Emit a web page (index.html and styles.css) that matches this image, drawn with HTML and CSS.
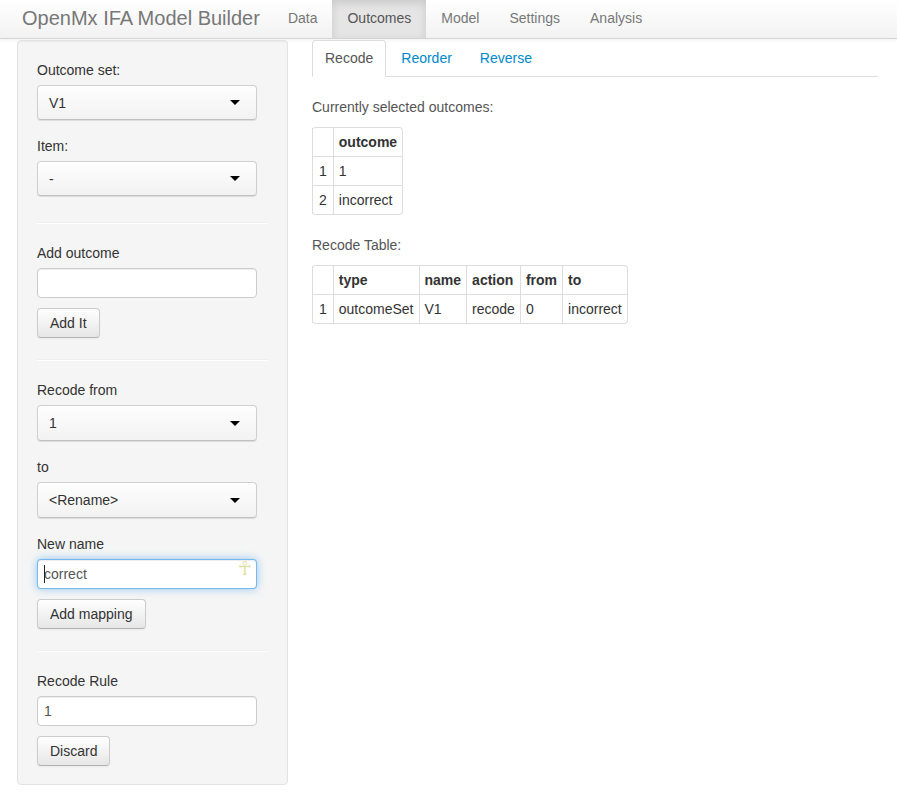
FILE: index.html
```html
<!DOCTYPE html>
<html>
<head>
<meta charset="utf-8">
<title>OpenMx IFA Model Builder</title>
<link rel="stylesheet" href="styles.css">
</head>
<body>
<div class="navbar">
  <span class="brand">OpenMx IFA Model Builder</span>
  <ul class="nav">
    <li><a>Data</a></li>
    <li class="active"><a>Outcomes</a></li>
    <li><a>Model</a></li>
    <li><a>Settings</a></li>
    <li><a>Analysis</a></li>
  </ul>
</div>
<div class="page">
  <div class="well">
    <div class="field">
      <label>Outcome set:</label>
      <div class="select"><span>V1</span><span class="caret"></span></div>
    </div>
    <div class="field">
      <label>Item:</label>
      <div class="select"><span>-</span><span class="caret"></span></div>
    </div>
    <hr>
    <div class="field field-btn">
      <label>Add outcome</label>
      <input class="input" type="text" value="">
      <button class="btn">Add It</button>
    </div>
    <hr>
    <div class="field field-wide">
      <label>Recode from</label>
      <div class="select"><span>1</span><span class="caret"></span></div>
    </div>
    <div class="field field-wide">
      <label>to</label>
      <div class="select"><span>&lt;Rename&gt;</span><span class="caret"></span></div>
    </div>
    <div class="field field-btn">
      <label>New name</label>
      <div class="input-wrap">
        <input class="input focused" type="text" value="correct">
        <span class="text-caret"></span>
        <span class="ankh">☥</span>
      </div>
      <button class="btn">Add mapping</button>
    </div>
    <hr>
    <div class="field field-end">
      <label>Recode Rule</label>
      <input class="input" type="text" value="1">
      <button class="btn">Discard</button>
    </div>
  </div>
  <div class="main">
    <ul class="tabs">
      <li class="active"><a>Recode</a></li>
      <li><a>Reorder</a></li>
      <li><a>Reverse</a></li>
    </ul>
    <p>Currently selected outcomes:</p>
    <table class="table">
      <thead><tr><th></th><th>outcome</th></tr></thead>
      <tbody>
        <tr><td>1</td><td>1</td></tr>
        <tr><td>2</td><td>incorrect</td></tr>
      </tbody>
    </table>
    <p>Recode Table:</p>
    <table class="table">
      <thead><tr><th></th><th>type</th><th>name</th><th>action</th><th>from</th><th>to</th></tr></thead>
      <tbody>
        <tr><td>1</td><td>outcomeSet</td><td>V1</td><td>recode</td><td>0</td><td>incorrect</td></tr>
      </tbody>
    </table>
  </div>
</div>
</body>
</html>
```
FILE: styles.css
```css
* { box-sizing: border-box; }
html, body { margin: 0; padding: 0; background: #fff; }
body {
  font-family: "Liberation Sans", Arial, sans-serif;
  font-size: 14px;
  line-height: 20px;
  color: #333;
}
.navbar {
  height: 39px;
  display: flex;
  align-items: stretch;
  background: linear-gradient(to bottom, #ffffff, #f2f2f2);
  border-bottom: 1px solid #d4d4d4;
  box-shadow: 0 1px 4px rgba(0,0,0,0.065);
}
.brand {
  font-size: 20px;
  color: #777;
  padding: 8px 13px 9px 22px;
  line-height: 20px;
}
.nav {
  list-style: none;
  margin: 0;
  padding: 0;
  display: flex;
}
.nav li a {
  display: block;
  height: 38px;
  padding: 8px 15px;
  color: #777;
  line-height: 20px;
}
.nav li.active a {
  background: #e5e5e5;
  color: #555;
  box-shadow: inset 0 3px 8px rgba(0,0,0,0.125);
}
.page {
  display: flex;
  align-items: flex-start;
  padding: 1px 19px 0 17px;
  gap: 24px;
}
.well {
  width: 271px;
  flex: none;
  display: flex;
  flex-direction: column;
  align-items: flex-start;
  background: #f5f5f5;
  border: 1px solid #e3e3e3;
  border-radius: 4px;
  box-shadow: inset 0 1px 1px rgba(0,0,0,0.05);
  padding: 19px 19px 18px;
}
.field { margin-bottom: 16px; }
.field-wide { margin-bottom: 16px; }
.field-wide .select { height: 36px; }
.field-btn { margin-bottom: 11px; }
.field-end { margin-bottom: 0; }
.field label {
  display: block;
  margin-bottom: 5px;
}
hr {
  align-self: stretch;
  margin: 10px 0 19px;
  border: 0;
  border-top: 1px solid #eee;
  border-bottom: 1px solid #fff;
  height: 0;
}
.select {
  width: 220px;
  height: 35px;
  display: flex;
  align-items: center;
  justify-content: space-between;
  padding: 0 16px 0 11px;
  background: linear-gradient(to bottom, #fefefe, #f2f2f2);
  border: 1px solid #d0d0d0;
  border-bottom-color: #c0c0c0;
  border-radius: 4px;
  box-shadow: 0 1px 1px rgba(0,0,0,0.1), inset 0 1px 0 rgba(255,255,255,0.8);
  color: #333;
}
.caret {
  width: 0;
  height: 0;
  border-left: 5px solid transparent;
  border-right: 5px solid transparent;
  border-top: 5px solid #000;
}
.input {
  display: block;
  width: 220px;
  height: 30px;
  padding: 4px 6px;
  font-family: "Liberation Sans", Arial, sans-serif;
  font-size: 14px;
  line-height: 20px;
  color: #555;
  background: #fff;
  border: 1px solid #ccc;
  border-radius: 4px;
  box-shadow: inset 0 1px 1px rgba(0,0,0,0.075);
  margin: 0 0 10px;
  outline: none;
}
.input.focused {
  border-color: rgba(82,168,236,0.8);
  box-shadow: inset 0 1px 1px rgba(0,0,0,0.075), 0 0 8px rgba(82,168,236,0.6);
}
.input-wrap {
  position: relative;
  width: 220px;
}
.text-caret {
  position: absolute;
  left: 7px;
  top: 6px;
  width: 1px;
  height: 18px;
  background: #222;
}
.ankh {
  position: absolute;
  right: 5px;
  top: 0;
  font-family: "DejaVu Sans", sans-serif;
  font-size: 19px;
  color: #e0de9c;
  line-height: 18px;
}
.btn {
  display: block;
  height: 30px;
  padding: 4px 12px;
  font-family: "Liberation Sans", Arial, sans-serif;
  font-size: 14px;
  line-height: 20px;
  color: #333;
  background: linear-gradient(to bottom, #ffffff, #e6e6e6);
  border: 1px solid #ccc;
  border-bottom-color: #b3b3b3;
  border-radius: 4px;
  box-shadow: inset 0 1px 0 rgba(255,255,255,0.2), 0 1px 2px rgba(0,0,0,0.05);
}
.main {
  flex: 1;
  min-width: 0;
}
.tabs {
  list-style: none;
  margin: 0 0 20px;
  padding: 0;
  display: flex;
  border-bottom: 1px solid #ddd;
}
.tabs li { margin-bottom: -1px; margin-right: 2px; }
.tabs li a {
  display: block;
  padding: 7px 12px 8px;
  line-height: 20px;
  color: #0088cc;
  border: 1px solid transparent;
  border-radius: 4px 4px 0 0;
}
.tabs li.active a {
  color: #555;
  background: #fff;
  border-color: #ddd #ddd transparent;
}
p { margin: 0 0 10px; color: #555; }
.table {
  border-collapse: separate;
  border-spacing: 0;
  border: 1px solid #ddd;
  border-left: 0;
  border-radius: 4px;
  margin-bottom: 20px;
}
.table th, .table td {
  padding: 4px 5px;
  line-height: 20px;
  text-align: left;
  border-left: 1px solid #ddd;
  border-top: 1px solid #ddd;
  color: #333;
}
.table th { font-weight: bold; border-top: 0; }
.table th:first-child, .table td:first-child { padding: 4px 6px; }
```
